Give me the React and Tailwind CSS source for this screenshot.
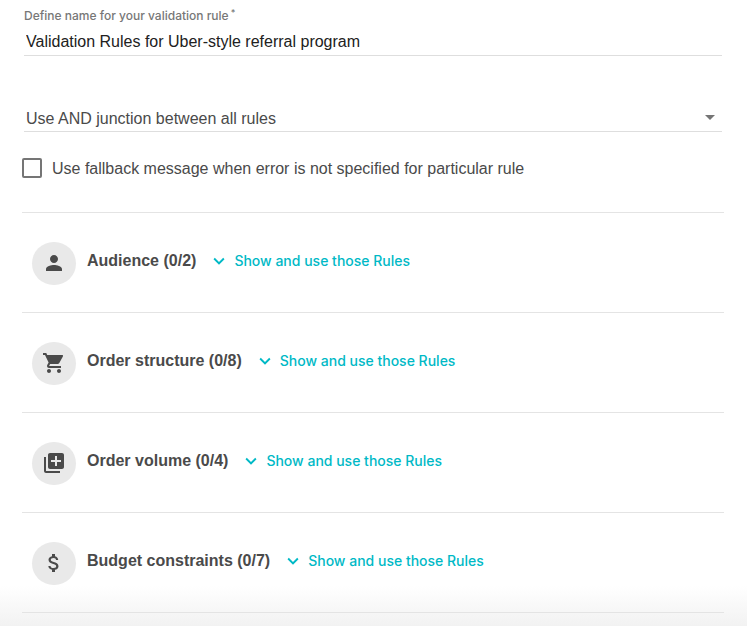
import React, { useState } from 'react';
import {
  MdArrowDropDown,
  MdAttachMoney,
  MdExpandMore,
  MdLibraryAdd,
  MdPerson,
  MdShoppingCart,
} from 'react-icons/md';

const ruleGroups = [
  { id: 'audience', name: 'Audience', used: 0, total: 2, icon: MdPerson },
  { id: 'structure', name: 'Order structure', used: 0, total: 8, icon: MdShoppingCart },
  { id: 'volume', name: 'Order volume', used: 0, total: 4, icon: MdLibraryAdd },
  { id: 'budget', name: 'Budget constraints', used: 0, total: 7, icon: MdAttachMoney },
];

function RuleGroup({ group }) {
  const Icon = group.icon;

  return (
    <li className="flex items-start border-b border-[#e4e4e4] pt-[29px] pb-[27px] pl-[10px]">
      <div className="flex h-[43px] w-11 shrink-0 items-center justify-center rounded-full bg-[#e9e9e9] pb-[2px]">
        <Icon className="size-6 text-[#4a4a4a]" />
      </div>
      <div className="ml-[11px] flex h-[38px] items-center">
        <h2 className="text-base font-bold text-[#4a4a4a]">
          {group.name} ({group.used}/{group.total})
        </h2>
        <button
          type="button"
          className="ml-3 flex items-center gap-1 font-[Inter,sans-serif] text-sm font-medium text-[#00b9c6]"
        >
          <MdExpandMore className="size-[22px]" />
          Show and use those Rules
        </button>
      </div>
    </li>
  );
}

export default function App() {
  const [name, setName] = useState('Validation Rules for Uber-style referral program');
  const [junction, setJunction] = useState('and');
  const [fallback, setFallback] = useState(false);

  return (
    <main className="min-h-screen bg-white bg-linear-to-t from-[#f2f2f2] to-white to-[40px] pr-[23px] pl-[22px] font-['Liberation_Sans',Arial,sans-serif]">
      <form>
        {/* Name */}
        <div className="mr-[2px] ml-[2px] pt-2">
          <label
            htmlFor="rule-name"
            className="block font-[Inter,sans-serif] text-xs leading-4 font-medium text-[#777777]"
          >
            Define name for your validation rule
            <sup className="ml-[2px] text-[9px]">*</sup>
          </label>
          <input
            id="rule-name"
            type="text"
            value={name}
            onChange={(e) => setName(e.target.value)}
            className="block h-8 w-full border-b border-[#dedede] bg-transparent pt-[5px] pl-[2px] text-base text-[#212121] outline-none"
          />
        </div>

        {/* Junction */}
        <div className="relative mt-12 mr-[2px] ml-[2px]">
          <select
            aria-label="Junction between rules"
            value={junction}
            onChange={(e) => setJunction(e.target.value)}
            className="block h-7 w-full appearance-none border-b border-[#dedede] bg-transparent pt-[2px] pl-[2px] text-base text-[#4a4a4a] outline-none"
          >
            <option value="and">Use AND junction between all rules</option>
            <option value="or">Use OR junction between all rules</option>
          </select>
          <MdArrowDropDown className="pointer-events-none absolute top-[1px] right-0 size-6 text-[#757575]" />
        </div>

        {/* Fallback message */}
        <label className="mt-6 flex h-6 items-center gap-[10px] text-base text-[#4a4a4a]">
          <input
            type="checkbox"
            checked={fallback}
            onChange={(e) => setFallback(e.target.checked)}
            className="size-5 shrink-0 appearance-none rounded-[2px] border-2 border-[#757575] checked:bg-[#757575]"
          />
          <span className="pt-[2px]">
            Use fallback message when error is not specified for particular rule
          </span>
        </label>

        <ul className="mt-8 border-t border-[#e4e4e4]">
          {ruleGroups.map((group) => (
            <RuleGroup key={group.id} group={group} />
          ))}
        </ul>
      </form>
    </main>
  );
}
